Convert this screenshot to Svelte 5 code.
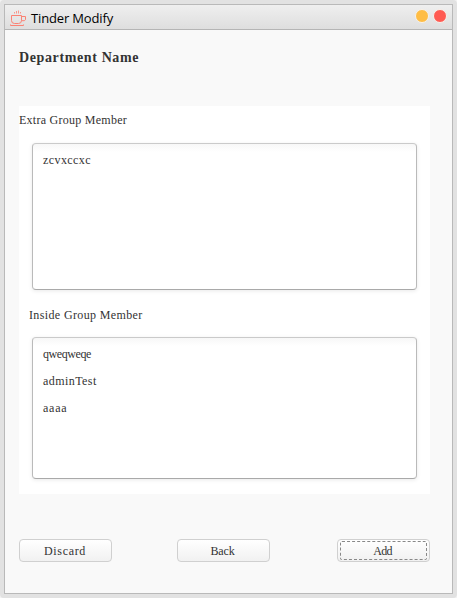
<script>
  const extra = [{ name: 'zcvxccxc', gap: 0.42 }];
  const inside = [
    { name: 'qweqweqe', gap: -0.41 },
    { name: 'adminTest', gap: 0.43 },
    { name: 'aaaa', gap: 0.75 }
  ];
</script>

<div class="frame">
  <main class="window">
    <header>
      <svg class="cup" width="18" height="18" viewBox="0 0 18 18" fill="none" stroke="#fb8274" stroke-width="1">
        <path d="M4.5 2v1.5M6.5 1v2.5M8.5 .5v3M10.5 2v1.5" stroke-width=".8" />
        <path d="M1.5 5.5h10v5q0 3-3 3h-4q-3 0-3-3z" />
        <path d="M11.5 6.5h4v3.2l-1.2 1h-2.8M.5 14.5v1h13v-1" />
      </svg>
      <span class="title">Tinder Modify</span>
      <i class="dot yellow"></i>
      <i class="dot red"></i>
    </header>
    <h1>Department Name</h1>
    <section>
      <h2 class="extra-label">Extra Group Member</h2>
      <ul class="extra">
        {#each extra as m}<li style="letter-spacing: {m.gap}px">{m.name}</li>{/each}
      </ul>
      <h2 class="inside-label">Inside Group Member</h2>
      <ul class="inside">
        {#each inside as m}<li style="letter-spacing: {m.gap}px">{m.name}</li>{/each}
      </ul>
    </section>
    <footer>
      <button class="discard">Discard</button>
      <button class="back">Back</button>
      <button class="add"><span>Add</span></button>
    </footer>
  </main>
</div>

<style>
  * { box-sizing: border-box; }
  :global(body) { background: #f3f3f3; }
  .frame {
    width: 457px;
    height: 598px;
    padding: 4px;
    border-radius: 4px;
    background: #e2e2e2;
    color: #333;
    font: 12px/14px "Liberation Serif", serif;
  }
  .window {
    display: flex;
    flex-direction: column;
    width: 449px;
    height: 590px;
    border: 1px solid #b9b9b9;
    background: #f9f9f9;
  }
  header {
    display: flex;
    align-items: center;
    height: 25px;
    padding: 0 5px;
    border-bottom: 1px solid #b5b5b5;
    background: linear-gradient(#efefef, #dedede);
  }
  .cup { flex: none; margin-top: 4px; }
  .title {
    flex: 1;
    margin-left: 3px;
    padding-top: 1px;
    color: #000;
    font: 13px/18px "Open Sans", sans-serif;
    letter-spacing: -0.15px;
  }
  .dot {
    width: 14px;
    height: 14px;
    margin: -2px 0 0 4px;
    border: 1px solid #f7f2ec;
    border-radius: 50%;
  }
  .yellow { background: #ffbd44; }
  .red { background: #ff5a52; }
  h1 {
    height: 16px;
    margin: 20px 0 40px 14px;
    font-size: 14px;
    line-height: 16px;
    letter-spacing: 0.62px;
  }
  section {
    width: 411px;
    height: 388px;
    margin-left: 14px;
    background: #fff;
  }
  h2 { height: 14px; margin: 0; font-size: 12px; font-weight: 400; }
  .extra-label { height: 22px; padding-top: 7px; letter-spacing: 0.26px; }
  .inside-label { margin: 18px 0 0 10px; letter-spacing: 0.37px; }
  ul {
    width: 385px;
    margin: 15px 0 0 13px;
    padding: 3px 10px;
    border: 1px solid #bababa;
    border-top-color: #cacaca;
    border-bottom-color: #a9a9a9;
    border-radius: 4px;
    list-style: none;
    background: linear-gradient(#f7f7f7, #fff 8px);
    box-shadow: 0 1px 4px rgba(0, 0, 0, 0.09);
  }
  .extra { height: 147px; }
  .inside { height: 142px; }
  li { height: 27px; line-height: 26px; }
  footer {
    display: flex;
    margin: 45px 22px 0 14px;
  }
  button {
    width: 93px;
    height: 23px;
    padding: 1px;
    border: 1px solid #d0d0d0;
    border-radius: 4px;
    background: linear-gradient(#fff, #f1f1f1);
    color: #333;
    font: inherit;
  }
  .discard { padding-right: 2px; letter-spacing: 0.67px; }
  .back { margin-left: 65px; padding-right: 3px; letter-spacing: -0.16px; }
  .add { margin-left: 67px; letter-spacing: -0.7px; }
  .add span {
    display: block;
    height: 19px;
    margin: 0 1px;
    padding-right: 2px;
    border: 1px dashed #888;
    border-radius: 2px;
    line-height: 19px;
  }
</style>
